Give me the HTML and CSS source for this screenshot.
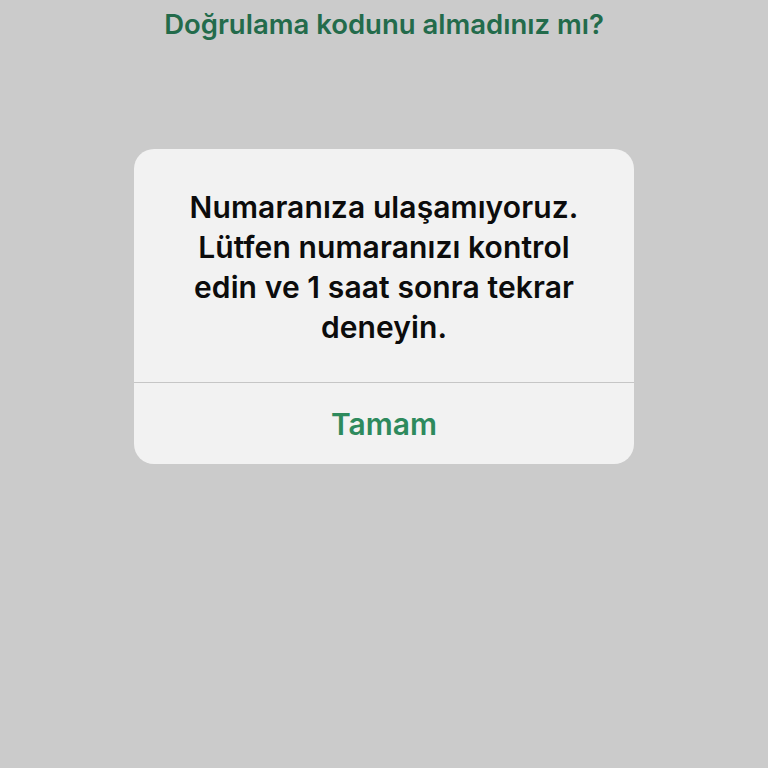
FILE: index.html
```html
<!DOCTYPE html>
<html lang="tr">
<head>
<meta charset="utf-8">
<link rel="stylesheet" href="styles.css">
</head>
<body>
<div class="screen">
  <div class="top-link">Doğrulama kodunu almadınız mı?</div>
  <div class="alert">
    <div class="alert-message">Numaranıza ulaşamıyoruz. Lütfen numaranızı kontrol edin ve 1 saat sonra tekrar deneyin.</div>
    <div class="alert-action">Tamam</div>
  </div>
</div>
</body>
</html>
```

FILE: styles.css
```css
html, body {
  margin: 0;
  padding: 0;
}
body {
  background: #cbcbcb;
  font-family: Inter, "Noto Sans", "Liberation Sans", sans-serif;
}
.screen {
  width: 768px;
  height: 768px;
  display: flex;
  flex-direction: column;
  align-items: center;
}
.top-link {
  margin-top: 7px;
  height: 34px;
  line-height: 34px;
  font-size: 27.5px;
  font-weight: 600;
  color: #236b4b;
  letter-spacing: 0;
}
.alert {
  margin-top: 108px;
  width: 500px;
  background: #f2f2f2;
  border-radius: 20px;
  overflow: hidden;
}
.alert-message {
  padding: 38px 40px 35px;
  text-align: center;
  font-size: 30px;
  line-height: 40px;
  font-weight: 600;
  color: #0c0c0c;
  letter-spacing: 0.1px;
}
.alert-action {
  border-top: 1px solid #c6c6c6;
  height: 81px;
  line-height: 83px;
  text-align: center;
  font-size: 30px;
  font-weight: 600;
  color: #2e8a5d;
}
```
